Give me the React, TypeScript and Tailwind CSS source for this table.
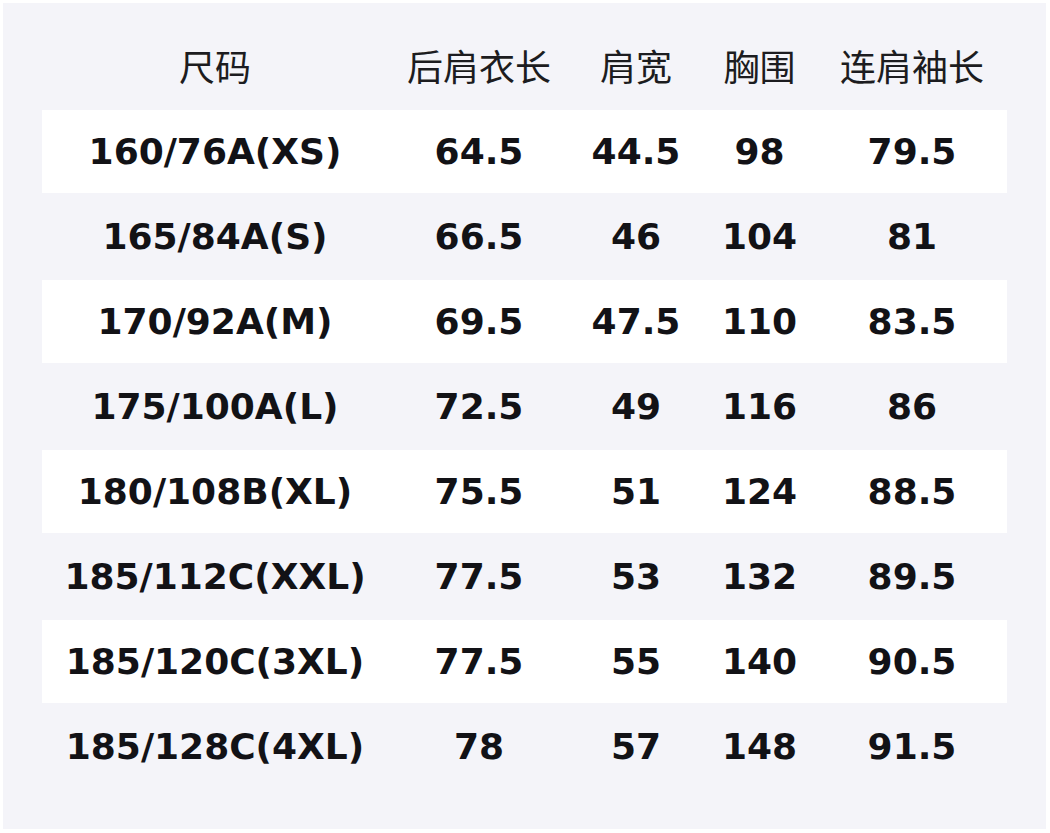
import React from 'react';

interface SizeRow {
  size: string;
  length: string;
  shoulder: string;
  chest: string;
  sleeve: string;
}

const headers = ['尺码', '后肩衣长', '肩宽', '胸围', '连肩袖长'];

const rows: SizeRow[] = [
  { size: '160/76A(XS)', length: '64.5', shoulder: '44.5', chest: '98', sleeve: '79.5' },
  { size: '165/84A(S)', length: '66.5', shoulder: '46', chest: '104', sleeve: '81' },
  { size: '170/92A(M)', length: '69.5', shoulder: '47.5', chest: '110', sleeve: '83.5' },
  { size: '175/100A(L)', length: '72.5', shoulder: '49', chest: '116', sleeve: '86' },
  { size: '180/108B(XL)', length: '75.5', shoulder: '51', chest: '124', sleeve: '88.5' },
  { size: '185/112C(XXL)', length: '77.5', shoulder: '53', chest: '132', sleeve: '89.5' },
  { size: '185/120C(3XL)', length: '77.5', shoulder: '55', chest: '140', sleeve: '90.5' },
  { size: '185/128C(4XL)', length: '78', shoulder: '57', chest: '148', sleeve: '91.5' },
];

// column widths measured off the table (auto layout in the original)
const gridCols = 'grid grid-cols-[346px_182px_132px_115px_190px] items-center text-center';

export default function App() {
  return (
    <div className="w-[1050px] h-[833px] bg-white p-[3px]">
      <div className="w-[1043px] h-[826px] bg-[#f4f4f9] pt-[22px] px-[39px]">
        <div
          className={`${gridCols} h-[85px] pb-[6px] text-[36px] text-[#1c1c20]`}
          style={{ fontFamily: '"Noto Sans CJK SC", "Noto Sans", sans-serif' }}
        >
          {headers.map(h => (
            <div key={h} className="leading-none">{h}</div>
          ))}
        </div>

        {rows.map((row, index) => (
          <div
            key={row.size}
            className={`${gridCols} ${index % 2 === 0 ? 'h-[83px] bg-white' : 'h-[87px]'} text-[36px] font-bold text-[#121216]`}
            style={{ fontFamily: '"DejaVu Sans", "Liberation Sans", sans-serif' }}
          >
            <div>{row.size}</div>
            <div>{row.length}</div>
            <div>{row.shoulder}</div>
            <div>{row.chest}</div>
            <div>{row.sleeve}</div>
          </div>
        ))}
      </div>
    </div>
  );
}
